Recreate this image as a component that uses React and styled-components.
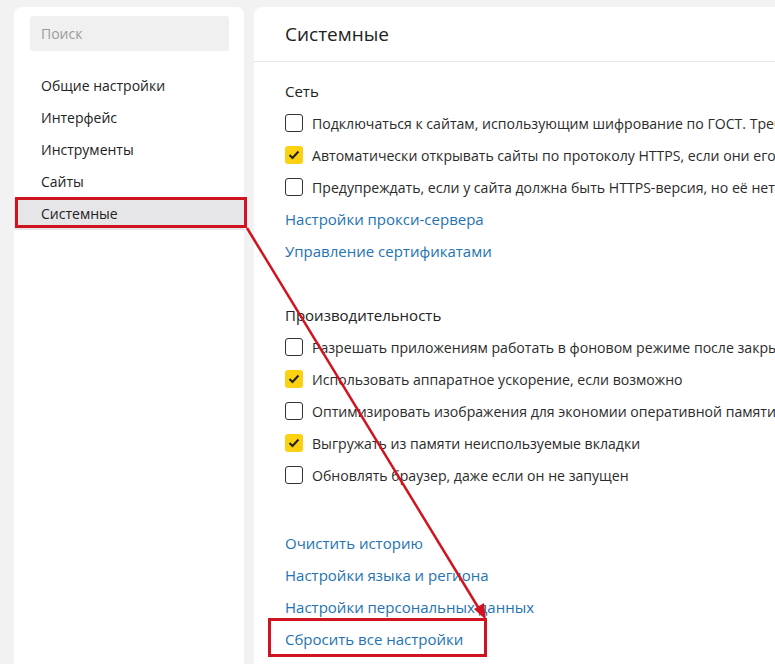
import React from "react";
import styled, { createGlobalStyle } from "styled-components";

const GlobalStyle = createGlobalStyle`
  html, body {
    margin: 0;
    padding: 0;
    background: #f2f2f2;
    font-family: "Open Sans", "Noto Sans", sans-serif;
    color: #2b2b2b;
  }
  #root {
    height: 664px;
    overflow: hidden;
  }
`;

const Page = styled.div`
  position: relative;
  display: flex;
  gap: 10px;
  height: 664px;
  padding: 7px 0 0 14px;
  box-sizing: border-box;
`;

const Sidebar = styled.aside`
  width: 230px;
  flex-shrink: 0;
  background: #fff;
  border-radius: 8px 8px 0 0;
  padding-top: 9px;
  box-sizing: border-box;
`;

const Search = styled.div`
  margin: 0 15px 0 16px;
  height: 35px;
  background: #f0f0f0;
  border-radius: 3px;
  display: flex;
  align-items: center;
  padding-left: 11px;
  font-size: 14px;
  color: #9a9a9a;
`;

const NavList = styled.nav`
  margin-top: 19px;
  display: flex;
  flex-direction: column;
`;

const NavItem = styled.div`
  position: relative;
  height: 32px;
  line-height: 32px;
  padding-left: 27px;
  font-size: 14px;
  color: #222;
  background: ${(p) => (p.active ? "#e6e6e9" : "transparent")};
  ${(p) =>
    p.marked &&
    `
    &::after {
      content: "";
      position: absolute;
      left: 1px;
      right: -3px;
      top: -1px;
      bottom: 2px;
      border: 3px solid #cf1420;
    }
  `}
`;

const Main = styled.main`
  flex: 1;
  min-width: 0;
  background: #fff;
  border-radius: 8px 0 0 0;
  overflow: hidden;
`;

const Header = styled.header`
  height: 54px;
  display: flex;
  align-items: center;
  padding-left: 31px;
  font-size: 19px;
  color: #222;
  border-bottom: 1px solid #e8e8e8;
`;

const Content = styled.div`
  padding: 13px 0 0 31px;
`;

const Section = styled.section`
  margin-bottom: ${(p) => p.gap || 0}px;
`;

const SectionTitle = styled.div`
  height: 32px;
  line-height: 32px;
  font-size: 15px;
  color: #222;
`;

const Row = styled.label`
  display: flex;
  align-items: center;
  height: 32px;
  gap: 9px;
  font-size: 14.1px;
  color: #2b2b2b;
  white-space: nowrap;
`;

const Box = styled.span`
  width: 18px;
  height: 18px;
  flex-shrink: 0;
  box-sizing: border-box;
  border-radius: 3px;
  border: ${(p) => (p.checked ? "none" : "1.6px solid #333")};
  background: ${(p) => (p.checked ? "#fcd10f" : "#fff")};
  display: flex;
  align-items: center;
  justify-content: center;
`;

const LinkItem = styled.div`
  position: relative;
  height: 32px;
  line-height: 32px;
  font-size: 15px;
  color: #2473b0;
  white-space: nowrap;
  ${(p) =>
    p.marked &&
    `
    &::after {
      content: "";
      position: absolute;
      left: -17px;
      width: 219px;
      top: -5px;
      bottom: -2px;
      box-sizing: border-box;
      border: 3px solid #cf1420;
    }
  `}
`;

const Arrow = styled.svg`
  position: absolute;
  left: 0;
  top: 0;
  pointer-events: none;
`;

function Checkbox({ checked, label }) {
  return (
    <Row>
      <Box checked={checked}>
        {checked && (
          <svg width="12" height="10" viewBox="0 0 12 10">
            <path d="M1.5 5 L4.5 8 L10.5 1.5" fill="none" stroke="#222" strokeWidth="2" />
          </svg>
        )}
      </Box>
      {label}
    </Row>
  );
}

const nav = ["Общие настройки", "Интерфейс", "Инструменты", "Сайты", "Системные"];

export default function App() {
  return (
    <>
      <GlobalStyle />
      <Page>
        <Sidebar>
          <Search>Поиск</Search>
          <NavList>
            {nav.map((n) => (
              <NavItem key={n} active={n === "Системные"} marked={n === "Системные"}>
                {n}
              </NavItem>
            ))}
          </NavList>
        </Sidebar>
        <Main>
          <Header>Системные</Header>
          <Content>
            <Section gap={32}>
              <SectionTitle>Сеть</SectionTitle>
              <Checkbox label="Подключаться к сайтам, использующим шифрование по ГОСТ. Требуется КриптоПро CSP" />
              <Checkbox checked label="Автоматически открывать сайты по протоколу HTTPS, если они его поддерживают" />
              <Checkbox label="Предупреждать, если у сайта должна быть HTTPS-версия, но её нет" />
              <LinkItem>Настройки прокси-сервера</LinkItem>
              <LinkItem>Управление сертификатами</LinkItem>
            </Section>
            <Section gap={36}>
              <SectionTitle>Производительность</SectionTitle>
              <Checkbox label="Разрешать приложениям работать в фоновом режиме после закрытия браузера" />
              <Checkbox checked label="Использовать аппаратное ускорение, если возможно" />
              <Checkbox label="Оптимизировать изображения для экономии оперативной памяти" />
              <Checkbox checked label="Выгружать из памяти неиспользуемые вкладки" />
              <Checkbox label="Обновлять браузер, даже если он не запущен" />
            </Section>
            <Section>
              <LinkItem>Очистить историю</LinkItem>
              <LinkItem>Настройки языка и региона</LinkItem>
              <LinkItem>Настройки персональных данных</LinkItem>
              <LinkItem marked>Сбросить все настройки</LinkItem>
            </Section>
          </Content>
        </Main>
        <Arrow width="775" height="664" viewBox="0 0 775 664">
          <line x1="247" y1="228" x2="481" y2="612" stroke="#d0141e" strokeWidth="2.5" />
          <polygon points="486,620 474,609 484,603" fill="#d0141e" />
        </Arrow>
      </Page>
    </>
  );
}
